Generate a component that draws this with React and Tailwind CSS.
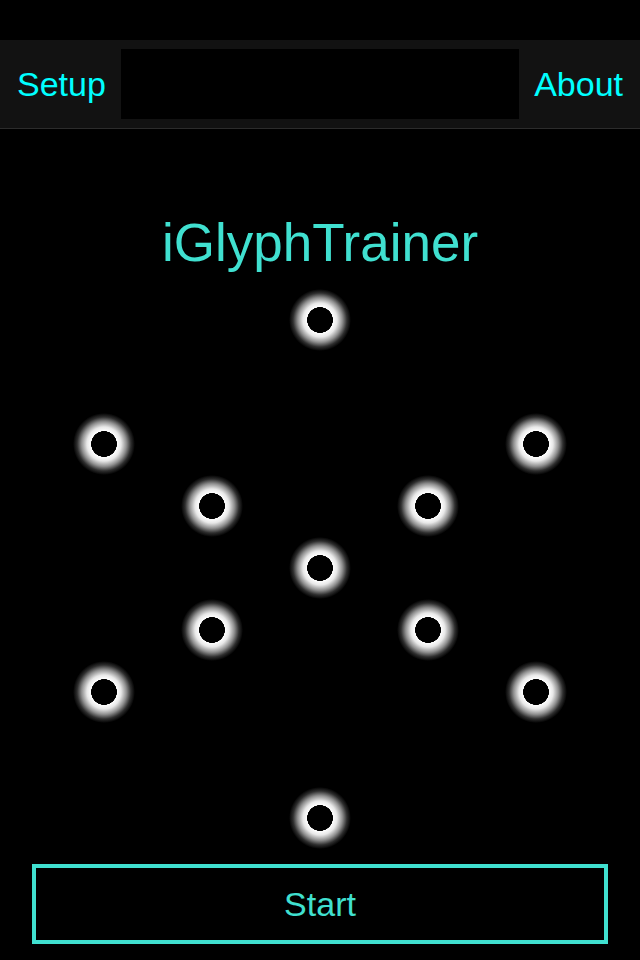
import React from 'react';

const nodes = [
  [320, 51],
  [104, 175],
  [536, 175],
  [212, 237],
  [428, 237],
  [320, 299],
  [212, 361],
  [428, 361],
  [104, 423],
  [536, 423],
  [320, 549],
];

const GlyphGrid = () => (
  <svg width="640" height="595" viewBox="0 0 640 595" className="block">
    <defs>
      <radialGradient id="glow" cx="0.5" cy="0.5" r="0.5">
        <stop offset="0" stopColor="#000" />
        <stop offset="0.41" stopColor="#000" />
        <stop offset="0.42" stopColor="#fff" />
        <stop offset="0.55" stopColor="#e8e8e8" />
        <stop offset="0.72" stopColor="#909090" />
        <stop offset="0.87" stopColor="#2e2e2e" />
        <stop offset="1" stopColor="#000" />
      </radialGradient>
    </defs>
    {nodes.map(([x, y], i) => (
      <circle key={i} cx={x} cy={y} r="31" fill="url(#glow)" />
    ))}
  </svg>
);

const App = () => {
  return (
    <div
      className="w-[640px] h-[960px] bg-black flex flex-col overflow-hidden"
      style={{ fontFamily: '"Liberation Sans", Arial, sans-serif' }}
    >
      <div className="h-10" />

      <div className="h-[89px] bg-[#121212] border-b border-[#2c2c2c] flex items-center justify-between px-[17px]">
        <span className="text-[34px] leading-none text-[#00ffff]">Setup</span>
        <div className="w-[398px] h-[70px] bg-black" />
        <span className="text-[34px] leading-none text-[#00ffff]">About</span>
      </div>

      <h1 className="mt-[87px] text-center text-[53px] leading-none text-[#40e0d0]">
        iGlyphTrainer
      </h1>

      <GlyphGrid />

      <button className="mx-8 h-20 border-4 border-[#40e0d0] text-[34px] leading-none text-[#40e0d0]">
        Start
      </button>
    </div>
  );
};

export default App;
